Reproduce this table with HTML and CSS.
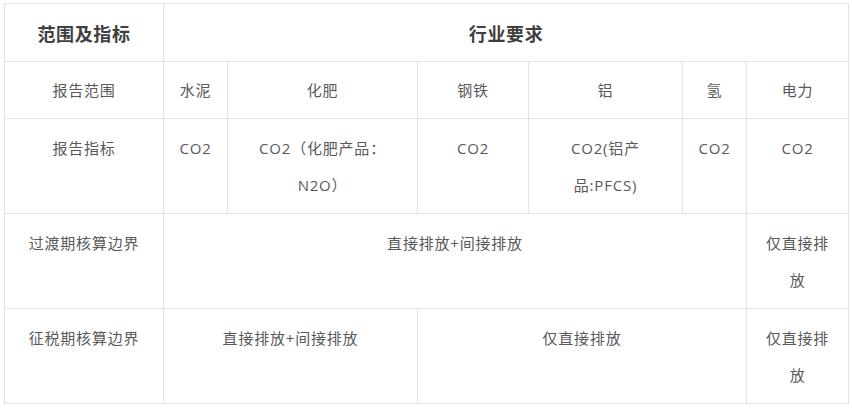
FILE: index.html
```html
<!DOCTYPE html>
<html lang="zh-CN">
<head>
<meta charset="utf-8">
<link rel="stylesheet" href="styles.css">
</head>
<body>
<table class="req">
  <colgroup>
    <col class="c1"><col class="c2"><col class="c3"><col class="c4"><col class="c5"><col class="c6"><col class="c7">
  </colgroup>
  <tr class="head">
    <th>范围及指标</th>
    <th colspan="6">行业要求</th>
  </tr>
  <tr>
    <td>报告范围</td>
    <td>水泥</td>
    <td>化肥</td>
    <td>钢铁</td>
    <td>铝</td>
    <td>氢</td>
    <td>电力</td>
  </tr>
  <tr class="tall">
    <td>报告指标</td>
    <td>CO2</td>
    <td>CO2（化肥产品：<br>N2O）</td>
    <td>CO2</td>
    <td>CO2(铝产<br>品:PFCS)</td>
    <td>CO2</td>
    <td>CO2</td>
  </tr>
  <tr class="tall">
    <td>过渡期核算边界</td>
    <td colspan="5">直接排放+间接排放</td>
    <td>仅直接排<br>放</td>
  </tr>
  <tr class="tall">
    <td>征税期核算边界</td>
    <td colspan="2">直接排放+间接排放</td>
    <td colspan="3">仅直接排放</td>
    <td>仅直接排<br>放</td>
  </tr>
</table>
</body>
</html>
```

FILE: styles.css
```css
html, body {
  margin: 0;
  padding: 0;
  background: #ffffff;
}
body {
  padding: 3px 0 0 4px;
  font-family: "Open Sans", "Noto Sans CJK SC", sans-serif;
}
.req {
  border-collapse: collapse;
  table-layout: fixed;
  width: 845px;
}
.c1 { width: 159px; }
.c2 { width: 64px; }
.c3 { width: 190px; }
.c4 { width: 111px; }
.c5 { width: 154px; }
.c6 { width: 64px; }
.c7 { width: 102px; }
.req th,
.req td {
  border: 1px solid #e3e3e3;
  padding: 10.5px 4px 8.5px;
  text-align: center;
  vertical-align: top;
  color: #595959;
  font-size: 15px;
  line-height: 37.5px;
  letter-spacing: 0.8px;
  font-weight: normal;
}
.req .head th {
  font-family: "Noto Sans CJK SC", sans-serif;
  font-size: 18px;
  font-weight: bold;
  color: #3f3f3f;
  letter-spacing: 0.6px;
}
```
